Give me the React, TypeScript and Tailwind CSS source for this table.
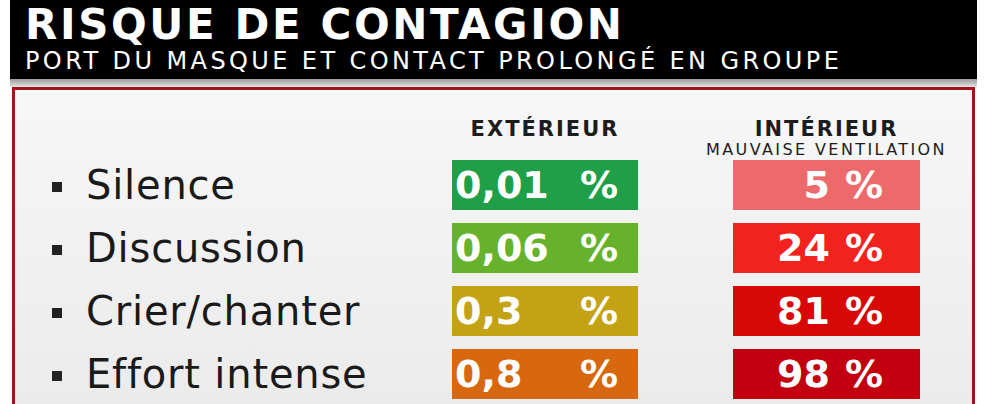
import React from 'react';

const rows = [
  { label: 'Silence', ext: '0,01', extBg: 'bg-[#1f9f48]', int: '5', intBg: 'bg-[#ec6a6c]' },
  { label: 'Discussion', ext: '0,06', extBg: 'bg-[#66b22c]', int: '24', intBg: 'bg-[#f2231f]' },
  { label: 'Crier/chanter', ext: '0,3', extBg: 'bg-[#c4a216]', int: '81', intBg: 'bg-[#d80808]' },
  { label: 'Effort intense', ext: '0,8', extBg: 'bg-[#d8680f]', int: '98', intBg: 'bg-[#c20010]' },
];

const App = () => {
  return (
    <div className="w-[996px] h-[404px] overflow-hidden bg-white pl-[10px] pr-[19px] font-['DejaVu_Sans',sans-serif]">
      <header className="h-[79px] bg-black pl-[15px] pt-[3px] text-white">
        <h1 className="text-[42px] leading-[44px] font-bold tracking-[2.6px]">RISQUE DE CONTAGION</h1>
        <p className="mt-[1px] text-[24px] leading-[26px] tracking-[3.4px]">PORT DU MASQUE ET CONTACT PROLONGÉ EN GROUPE</p>
      </header>
      <div className="h-[8px] bg-gradient-to-b from-[#9c9c9c] to-[#e4e4e4]" />

      <div className="mx-[2px] h-[320px] border-[3px] border-b-0 border-[#a3141b] bg-gradient-to-b from-[#f7f7f7] to-[#ebebeb]">
        <div className="grid grid-cols-[437px_186px_95px_187px] grid-rows-[57px_50px_50px_50px_50px] gap-y-[13px]">
          <div />
          <div className="pt-[27px] text-center text-[21px] leading-[24px] font-bold tracking-[2px] text-[#1c1c1c]">
            EXTÉRIEUR
          </div>
          <div />
          <div className="flex flex-col items-center pt-[27px] text-[#1c1c1c]">
            <span className="text-[21px] leading-[24px] font-bold tracking-[2px]">INTÉRIEUR</span>
            <span className="whitespace-nowrap text-[16px] leading-[17px] tracking-[2.4px]">MAUVAISE VENTILATION</span>
          </div>

          {rows.map((r) => (
            <React.Fragment key={r.label}>
              <div className="flex items-center pl-[37px] text-[#1a1a1a]">
                <span className="mr-[24px] mt-[3px] h-[10px] w-[10px] bg-[#222]" />
                <span className="text-[40px] leading-none tracking-[0.8px]">{r.label}</span>
              </div>
              <div className={`flex items-center justify-between pl-[3px] pr-[20px] text-[38px] font-bold leading-none text-white ${r.extBg}`}>
                <span>{r.ext}</span>
                <span>%</span>
              </div>
              <div />
              <div className={`flex items-center justify-end gap-[15px] pr-[37px] text-[38px] font-bold leading-none text-white ${r.intBg}`}>
                <span>{r.int}</span>
                <span>%</span>
              </div>
            </React.Fragment>
          ))}
        </div>
      </div>
    </div>
  );
};

export default App;
